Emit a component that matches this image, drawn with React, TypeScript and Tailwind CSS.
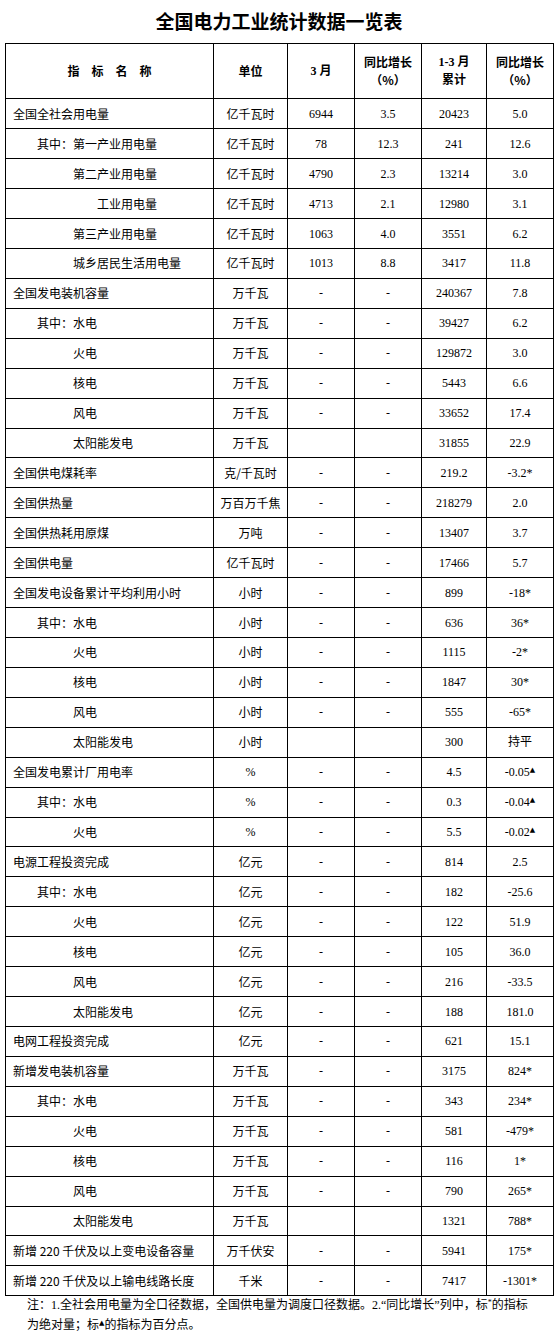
const serif = "font-['Liberation_Serif','Noto_Sans_CJK_SC',serif]"
const sans = "font-['Noto_Sans_CJK_SC','Noto_Sans',sans-serif]"

type Row = [string, number, string, string, string, string, string]

// name, indent level, unit, 3月, 同比, 1-3月累计, 同比
const rows: Row[] = [
  ["全国全社会用电量", 0, "亿千瓦时", "6944", "3.5", "20423", "5.0"],
  ["其中：第一产业用电量", 1, "亿千瓦时", "78", "12.3", "241", "12.6"],
  ["第二产业用电量", 2, "亿千瓦时", "4790", "2.3", "13214", "3.0"],
  ["工业用电量", 3, "亿千瓦时", "4713", "2.1", "12980", "3.1"],
  ["第三产业用电量", 2, "亿千瓦时", "1063", "4.0", "3551", "6.2"],
  ["城乡居民生活用电量", 2, "亿千瓦时", "1013", "8.8", "3417", "11.8"],
  ["全国发电装机容量", 0, "万千瓦", "-", "-", "240367", "7.8"],
  ["其中：水电", 1, "万千瓦", "-", "-", "39427", "6.2"],
  ["火电", 2, "万千瓦", "-", "-", "129872", "3.0"],
  ["核电", 2, "万千瓦", "-", "-", "5443", "6.6"],
  ["风电", 2, "万千瓦", "-", "-", "33652", "17.4"],
  ["太阳能发电", 2, "万千瓦", "", "", "31855", "22.9"],
  ["全国供电煤耗率", 0, "克/千瓦时", "-", "-", "219.2", "-3.2*"],
  ["全国供热量", 0, "万百万千焦", "-", "-", "218279", "2.0"],
  ["全国供热耗用原煤", 0, "万吨", "-", "-", "13407", "3.7"],
  ["全国供电量", 0, "亿千瓦时", "-", "-", "17466", "5.7"],
  ["全国发电设备累计平均利用小时", 0, "小时", "-", "-", "899", "-18*"],
  ["其中：水电", 1, "小时", "-", "-", "636", "36*"],
  ["火电", 2, "小时", "-", "-", "1115", "-2*"],
  ["核电", 2, "小时", "-", "-", "1847", "30*"],
  ["风电", 2, "小时", "-", "-", "555", "-65*"],
  ["太阳能发电", 2, "小时", "", "", "300", "持平"],
  ["全国发电累计厂用电率", 0, "%", "-", "-", "4.5", "-0.05▲"],
  ["其中：水电", 1, "%", "-", "-", "0.3", "-0.04▲"],
  ["火电", 2, "%", "-", "-", "5.5", "-0.02▲"],
  ["电源工程投资完成", 0, "亿元", "-", "-", "814", "2.5"],
  ["其中：水电", 1, "亿元", "-", "-", "182", "-25.6"],
  ["火电", 2, "亿元", "-", "-", "122", "51.9"],
  ["核电", 2, "亿元", "-", "-", "105", "36.0"],
  ["风电", 2, "亿元", "-", "-", "216", "-33.5"],
  ["太阳能发电", 2, "亿元", "-", "-", "188", "181.0"],
  ["电网工程投资完成", 0, "亿元", "-", "-", "621", "15.1"],
  ["新增发电装机容量", 0, "万千瓦", "-", "-", "3175", "824*"],
  ["其中：水电", 1, "万千瓦", "-", "-", "343", "234*"],
  ["火电", 2, "万千瓦", "-", "-", "581", "-479*"],
  ["核电", 2, "万千瓦", "-", "-", "116", "1*"],
  ["风电", 2, "万千瓦", "-", "-", "790", "265*"],
  ["太阳能发电", 2, "万千瓦", "", "", "1321", "788*"],
  ["新增 220 千伏及以上变电设备容量", 0, "万千伏安", "-", "-", "5941", "175*"],
  ["新增 220 千伏及以上输电线路长度", 0, "千米", "-", "-", "7417", "-1301*"],
]

const indents = ["pl-[7px]", "pl-[31px]", "pl-[67px]", "pl-[91px]"]

function Growth({ v }: { v: string }) {
  if (v.endsWith("▲")) {
    return (
      <>
        {v.slice(0, -1)}
        <span className="relative -top-[4px] text-[7px] font-['DejaVu_Sans']">▲</span>
      </>
    )
  }
  return <>{v}</>
}

export default function App() {
  const td = "border border-black text-center"
  return (
    <div className="w-[558px] bg-white text-black">
      {/* ===== Title ===== */}
      <div className={`h-[43px] flex items-center justify-center text-[19px] font-bold ${sans}`}>
        全国电力工业统计数据一览表
      </div>

      {/* ===== Table ===== */}
      <table className="ml-[5px] w-[548px] table-fixed border-collapse text-[12px]">
        <colgroup>
          <col className="w-[208px]" />
          <col className="w-[74px]" />
          <col className="w-[67px]" />
          <col className="w-[67px]" />
          <col className="w-[65px]" />
          <col className="w-[67px]" />
        </colgroup>
        <thead>
          <tr className="h-[55.4px] font-bold leading-[18px]">
            <th className={`${td} ${sans} tracking-[12px] pl-[12px]`}>指标名称</th>
            <th className={`${td} ${sans}`}>单位</th>
            <th className={`${td} ${serif}`}>3 月</th>
            <th className={`${td} ${sans}`}>
              同比增长
              <br />
              （%）
            </th>
            <th className={`${td} ${serif}`}>
              1-3 月
              <br />
              累计
            </th>
            <th className={`${td} ${sans}`}>
              同比增长
              <br />
              （%）
            </th>
          </tr>
        </thead>
        <tbody>
          {rows.map((r, i) => (
            <tr key={i} className="h-[29.93px]">
              <td className={`border border-black text-left ${indents[r[1]]} ${sans}`}>{r[0]}</td>
              <td className={`${td} ${r[2] === "%" ? serif : sans}`}>{r[2]}</td>
              <td className={`${td} ${serif}`}>{r[3]}</td>
              <td className={`${td} ${serif}`}>{r[4]}</td>
              <td className={`${td} ${serif}`}>{r[5]}</td>
              <td className={`${td} ${serif}`}>
                <Growth v={r[6]} />
              </td>
            </tr>
          ))}
        </tbody>
      </table>

      {/* ===== Note ===== */}
      <div className={`pl-[27px] text-[12px] leading-[19px] ${serif}`}>
        注：1.全社会用电量为全口径数据，全国供电量为调度口径数据。2.“同比增长”列中，标
        <span className="relative -top-[4px] text-[8px]">*</span>的指标
        <br />
        为绝对量；标<span className="relative -top-[4px] text-[7px] font-['DejaVu_Sans']">▲</span>
        的指标为百分点。
      </div>
    </div>
  )
}
